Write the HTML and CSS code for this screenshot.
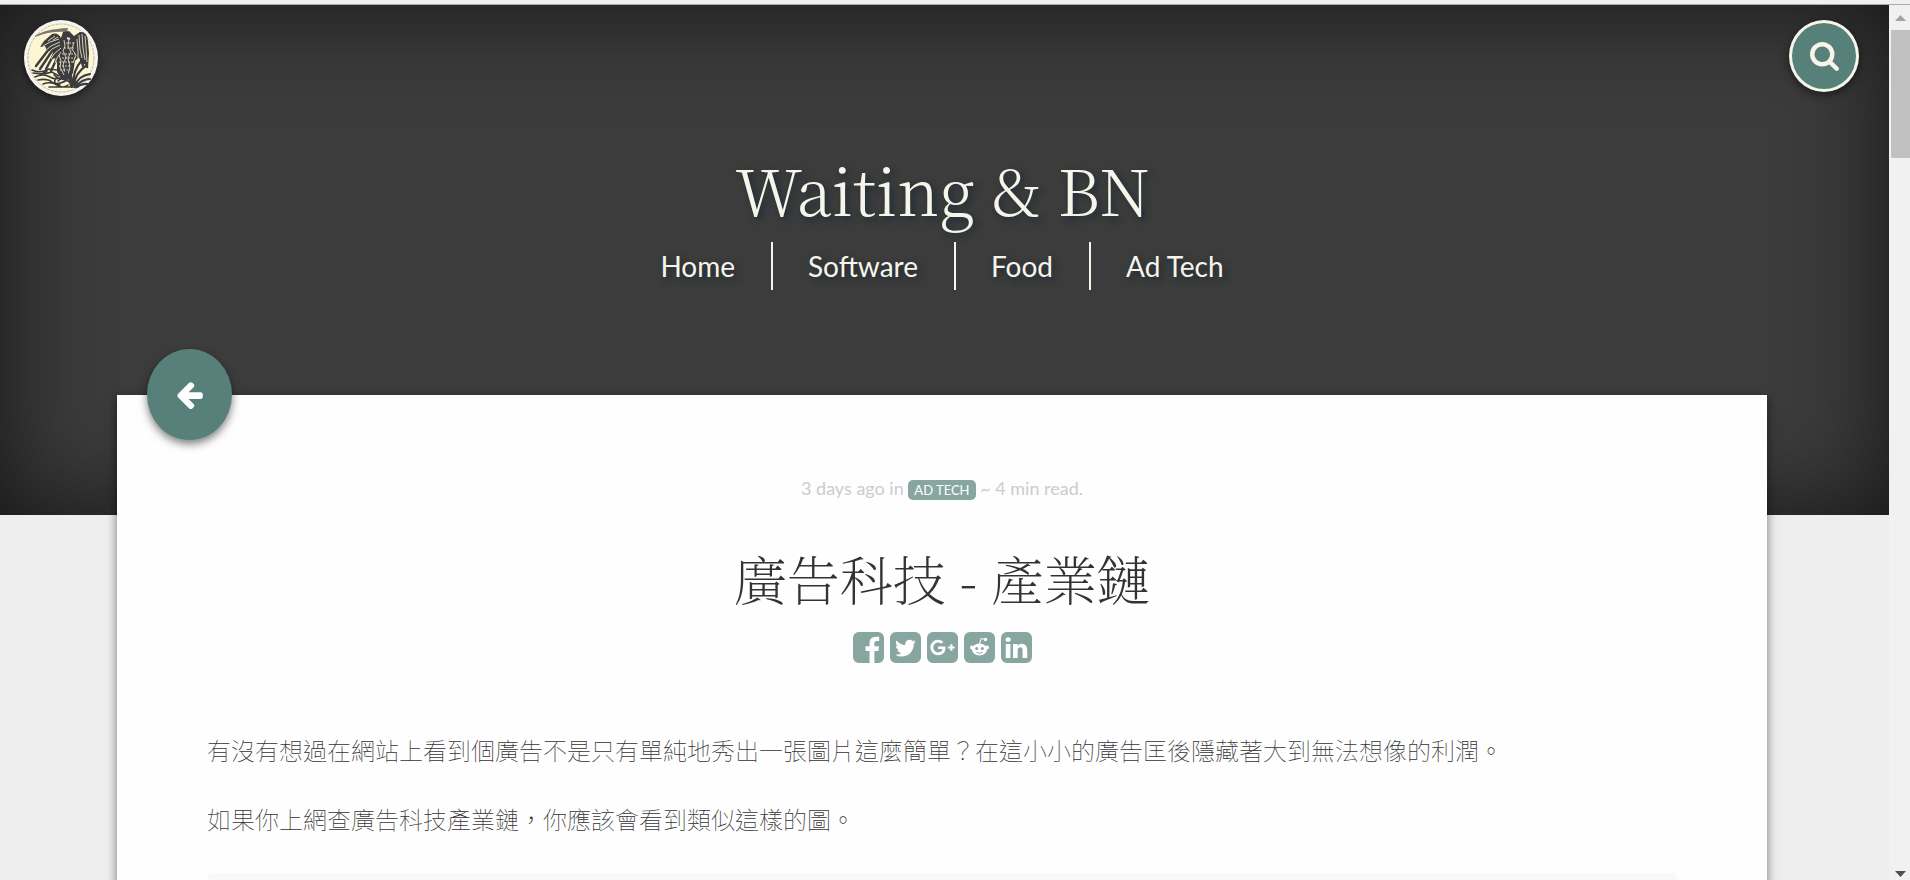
FILE: index.html
```html
<!DOCTYPE html>
<html lang="zh-Hant">
  <head>
    <meta charset="UTF-8" />
    <meta name="viewport" content="width=device-width, initial-scale=1.0" />
    <title>廣告科技 - 產業鏈 | Waiting &amp; BN</title>
    <link rel="stylesheet" href="styles.css" />
  </head>
  <body>
    <div class="window">
      <div class="page">
        <header class="site-header">
          <a class="logo" href="#" aria-label="Waiting &amp; BN">
            <svg viewBox="0 0 74 76">
              <ellipse cx="37" cy="38" rx="37" ry="38" fill="#f7f5ee" />
              <ellipse cx="37" cy="38" rx="33" ry="34" fill="#fdf6d3" stroke="#bbb9b4" stroke-dasharray="3 1" />
              <path d="M11 16q10-7 33-8l-1 4q-18-1-32 5z" fill="#77766f" />
              <!-- wings and body -->
              <g fill="#3c3c3e">
                <path d="M37 18q-3-6-9-4l-8 7-4 6 5-1 2 5 6 0-1 8 5-1 0 14 4 6 6 2 6-7 2-12 5-5 8-2-2-14-6-8-6 4-5-5-6 1z" />
                <path d="M56 12q7-1 8 9l1 12-1 15-3-4-2 1-2-6-5-3 1-20z" />
              </g>
              <g fill="none" stroke="#3c3c3e" stroke-width="2.400" stroke-linecap="round">
                <path d="M25 29l-13 17M28 31L16 49M30 34l-8 15M33 38l-6 13" />
                <path d="M56 36l3 10M62 34l1 13" />
              </g>
              <g fill="none" stroke="#e4dfc5" stroke-width=".9">
                <path d="M35 19l-9 3-7 4M36 22l-9 4-6 5M36 25l-8 4-5 5M37 28l-7 6-3 5M37 32l-4 6-2 5M31 16l-7 5M34 17l-5 3" />
                <path d="M40 20l1 6-2 5 3 6-3 8 2 7M45 18l-1 8 3 6-3 6 2 9-2 7M35 35l2 6-1 6 4 8M50 22l-2 7 4 6-3 8" />
                <path d="M35 42h14M35 46h13M36 50h11M38 34h13M40 28h10M38 38h13M42 23h7" stroke-dasharray="2 1" />
                <path d="M55 15l1 14 2 9M58 14l1 14 2 12M61 16l1 12 1 14M53 19l1 12 0 7" />
                <path d="M43 18l3 1" stroke-width="2" />
              </g>
              <!-- water and reeds -->
              <g fill="none" stroke="#3c3c3e" stroke-width="1.600" stroke-linecap="round">
                <path d="M8 50q9 4 17-1l8 1M9 53q10 2 19-1l7 4M11 57q8-4 15 0t14-1M14 60q9-2 14 2t15-2M19 64q8-3 14 1t11 0M25 67h29M30 55q8 7 15 3M16 55l7-4M34 61q6-6 11 1M32 58q-4 6 4 7" />
                <path d="M48 67q-2-14 0-21M49 65q0-15 9-25M50 65q1-12 13-20M51 66q3-10 15-12M51 67q7-8 15-8M52 67q7-4 12-3M47 66q-2-10-5-15" stroke-width="2.200" />
              </g>
            </svg>
          </a>
          <button class="search-button" type="button" aria-label="Search">
            <svg viewBox="0 0 1664 1664">
              <path d="M1152 704q0-185-131.500-316.500T704 256 387.500 387.500 256 704t131.500 316.500T704 1152t316.500-131.500T1152 704zm512 832q0 52-38 90t-90 38q-54 0-90-38l-343-342q-179 124-399 124-143 0-273.500-55.500t-225-150-150-225T0 704t55.500-273.500 150-225 225-150T704 0t273.500 55.500 225 150 150 225T1408 704q0 220-124 399l343 343q37 37 37 90z" />
            </svg>
          </button>
          <h1 class="site-title">Waiting &amp; BN</h1>
          <nav class="site-nav">
            <a href="#">Home</a>
            <a href="#">Software</a>
            <a href="#">Food</a>
            <a href="#">Ad Tech</a>
          </nav>
        </header>

        <main class="post">
          <a class="back-button" href="#" aria-label="Back">
            <svg viewBox="0 0 1792 1792">
              <path d="M1664 896v128q0 53-32.500 90.500t-84.500 37.500h-704l293 294q38 36 38 90t-38 90l-75 76q-37 37-90 37-52 0-91-37l-651-652q-37-37-37-90 0-52 37-91l651-650q38-38 91-38 52 0 90 38l75 74q38 38 38 91t-38 91l-293 293h704q52 0 84.500 37.500t32.500 90.500z" />
            </svg>
          </a>
          <p class="post-meta">
            3 days ago in <a class="tag" href="#">AD TECH</a> ~ 4 min read.
          </p>
          <h2 class="post-title">廣告科技 - 產業鏈</h2>
          <div class="share">
            <a href="#" aria-label="Facebook">
              <svg viewBox="128 128 1536 1536">
                <path d="M1376 128q119 0 203.500 84.500t84.500 203.500v960q0 119-84.500 203.500t-203.500 84.500h-188v-595h199l30-232h-229v-148q0-56 23.500-84t91.500-28l122-1v-207q-63-9-178-9-136 0-217.500 80t-81.500 226v171h-200v232h200v595h-532q-119 0-203.500-84.500t-84.500-203.500v-960q0-119 84.500-203.500t203.500-84.500h960z" />
              </svg>
            </a>
            <a href="#" aria-label="Twitter">
              <svg viewBox="128 128 1536 1536">
                <path d="M1408 610q-56 25-121 34 68-40 93-117-65 38-134 51-61-66-153-66-87 0-148.500 61.500t-61.500 148.500q0 29 5 48-129-7-242-65t-192-155q-29 50-29 106 0 114 91 175-47-1-100-26v2q0 75 50 133.500t123 72.500q-29 8-51 8-13 0-39-4 21 63 74.500 104t121.500 42q-116 90-261 90-26 0-50-3 148 94 322 94 112 0 210-35.500t168-95 120.500-137 75-162 24.500-168.500q0-18-1-27 63-45 105-109zm256-194v960q0 119-84.500 203.500t-203.500 84.500h-960q-119 0-203.500-84.500t-84.500-203.500v-960q0-119 84.500-203.500t203.500-84.500h960q119 0 203.500 84.500t84.500 203.500z" />
              </svg>
            </a>
            <a href="#" aria-label="Google Plus">
              <svg viewBox="128 128 1536 1536">
                <path d="M1045 905q0-26-6-64h-362v132h217q-3 24-16.500 50t-37.500 53-66.500 44.500-96.500 17.500q-99 0-169-71t-70-171 70-171 169-71q92 0 153 59l104-101q-108-100-257-100-160 0-272 112.500t-112 271.500 112 271.500 272 112.500q165 0 266.500-105t101.500-270zm345 46h109v-110h-109v-110h-110v110h-110v110h110v110h110v-110zm274-535v960q0 119-84.500 203.500t-203.500 84.500h-960q-119 0-203.500-84.500t-84.500-203.500v-960q0-119 84.500-203.500t203.500-84.500h960q119 0 203.500 84.500t84.500 203.500z" />
              </svg>
            </a>
            <a href="#" aria-label="Reddit">
              <svg viewBox="0 0 31 31">
                <rect width="31" height="31" rx="6" />
                <g fill="#fff">
                  <ellipse cx="15.500" cy="17.500" rx="7.500" ry="6" />
                  <circle cx="8" cy="15.500" r="2" />
                  <circle cx="23" cy="15.500" r="2" />
                  <circle cx="21.500" cy="7.500" r="1.700" />
                </g>
                <path d="M15.500 12l1.500-5.500 4 1" fill="none" stroke="#fff" />
                <circle cx="12.700" cy="16.500" r="1.500" />
                <circle cx="18.300" cy="16.500" r="1.500" />
                <path d="M12.500 20.300q3 2 6 0" class="reddit-mouth" />
              </svg>
            </a>
            <a href="#" aria-label="LinkedIn">
              <svg viewBox="128 128 1536 1536">
                <path d="M365 1414h231v-694h-231v694zm246-908q-1-52-36-86t-93-34-94.500 34-36.500 86q0 51 35.500 85.500t92.500 34.500h1q59 0 95-34.500t36-85.500zm585 908h231v-398q0-154-73-233t-193-79q-136 0-209 117h2v-101h-231q3 66 0 694h231v-388q0-38 7-56 15-35 45-59.500t74-24.500q116 0 116 157v371zm468-998v960q0 119-84.500 203.500t-203.500 84.500h-960q-119 0-203.500-84.500t-84.500-203.500v-960q0-119 84.500-203.500t203.500-84.500h960q119 0 203.500 84.500t84.500 203.500z" />
              </svg>
            </a>
          </div>
          <div class="post-content">
            <p>有沒有想過在網站上看到個廣告不是只有單純地秀出一張圖片這麼簡單？在這小小的廣告匡後隱藏著大到無法想像的利潤。</p>
            <p>如果你上網查廣告科技產業鏈，你應該會看到類似這樣的圖。</p>
            <figure class="post-figure"></figure>
          </div>
        </main>
      </div>

      <div class="scrollbar">
        <svg class="arrow-up" viewBox="0 0 11 6"><path d="M0 6l5.500-6L11 6z" /></svg>
        <div class="thumb"></div>
        <svg class="arrow-down" viewBox="0 0 11 6"><path d="M0 0h11L5.500 6z" /></svg>
      </div>
    </div>
  </body>
</html>
```
FILE: styles.css
```css
* {
  box-sizing: border-box;
}
body {
  margin: 0;
  background: #eee;
  font-family: Lato, "Noto Sans CJK TC", sans-serif;
}
a {
  color: inherit;
  text-decoration: none;
}
svg {
  display: block;
}

.window {
  height: 100vh;
  display: flex;
  overflow: hidden;
  border-top: 4px solid #f0f0f0;
}
.page {
  flex: 1;
  border-top: 1px solid #aaa;
}

/* header */
.site-header {
  position: relative;
  height: 510px;
  padding-top: 138px;
  padding-right: 4px;
  background: #3b3c3b;
  box-shadow: inset 0 0 100px #151515;
  color: #f7f5ea;
  text-align: center;
}
.logo {
  position: absolute;
  top: 15px;
  left: 24px;
  width: 74px;
  height: 76px;
  border-radius: 50%;
  box-shadow: 0 3px 8px rgba(0, 0, 0, 0.5);
}
.search-button {
  position: absolute;
  top: 15px;
  right: 30px;
  width: 70px;
  height: 72px;
  display: grid;
  place-items: center;
  padding: 0;
  background: #57807a;
  border: 3px solid #f7f5ea;
  border-radius: 50%;
  box-shadow: 0 3px 8px rgba(0, 0, 0, 0.5);
}
.search-button svg {
  width: 29px;
  fill: #f7f5ea;
}
.site-title {
  margin: 0 0 9px;
  font-family: "Noto Serif CJK TC", "Liberation Serif", serif;
  font-size: 64px;
  font-weight: 300;
  line-height: 90px;
  text-shadow: 3px 3px 6px #1f2b38;
}
.site-nav {
  display: flex;
  justify-content: center;
  font-size: 28px;
  line-height: 48px;
  text-shadow: 3px 3px 6px #1f2b38;
}
.site-nav a {
  padding: 0 36px 0 35px;
}
.site-nav a + a {
  border-left: 2px solid #f7f5ea;
}

/* post card */
.post {
  position: relative;
  min-height: 100vh;
  margin: -120px 122px 0 117px;
  padding: 79px 90px;
  background: #fefefe;
  box-shadow: 0 3px 10px rgba(0, 0, 0, 0.5);
  text-align: center;
}
.back-button {
  position: absolute;
  top: -46px;
  left: 30px;
  width: 85px;
  height: 91px;
  display: grid;
  place-items: center;
  background: #57807a;
  border-radius: 50%;
  box-shadow: 0 4px 8px rgba(0, 0, 0, 0.5);
}
.back-button svg {
  width: 31px;
  fill: #fff;
}
.post-meta {
  margin: 0;
  color: #ccc;
  font-size: 18px;
  line-height: 28px;
}
.tag {
  display: inline-block;
  padding: 0 6px;
  background: #88a6a0;
  border-radius: 5px;
  color: #fff;
  font-size: 13px;
  line-height: 20px;
}
.post-title {
  margin: 36px 0 14px;
  color: #333;
  font-family: "Noto Serif CJK TC", "Noto Sans CJK TC", serif;
  font-size: 53px;
  font-weight: 200;
  line-height: 80px;
}
.share {
  display: flex;
  justify-content: center;
  gap: 6px;
}
.share svg {
  width: 31px;
  height: 31px;
  fill: #88a6a0;
}
.share .reddit-mouth {
  fill: none;
  stroke: #88a6a0;
}
.post-content {
  margin-top: 64px;
  color: #333;
  font-family: "Noto Sans CJK TC", sans-serif;
  font-size: 24px;
  font-weight: 100;
  line-height: 45px;
  text-align: left;
}
.post-content p {
  margin: 0 0 24px;
}
.post-figure {
  height: 400px;
  margin: 32px 0 0;
  background: #faf9fa;
  border-radius: 5px;
}

/* scrollbar */
.scrollbar {
  width: 21px;
  display: flex;
  flex-direction: column;
  align-items: center;
  padding: 10px 0 3px 2px;
  background: #f1f1f1;
  border-top: 1px solid #aaa;
}
.scrollbar svg {
  width: 11px;
}
.arrow-up {
  fill: #a3a3a0;
}
.arrow-down {
  margin-top: auto;
  fill: #505050;
}
.thumb {
  width: 100%;
  height: 128px;
  margin-top: 9px;
  background: #c1c1c1;
}
```
